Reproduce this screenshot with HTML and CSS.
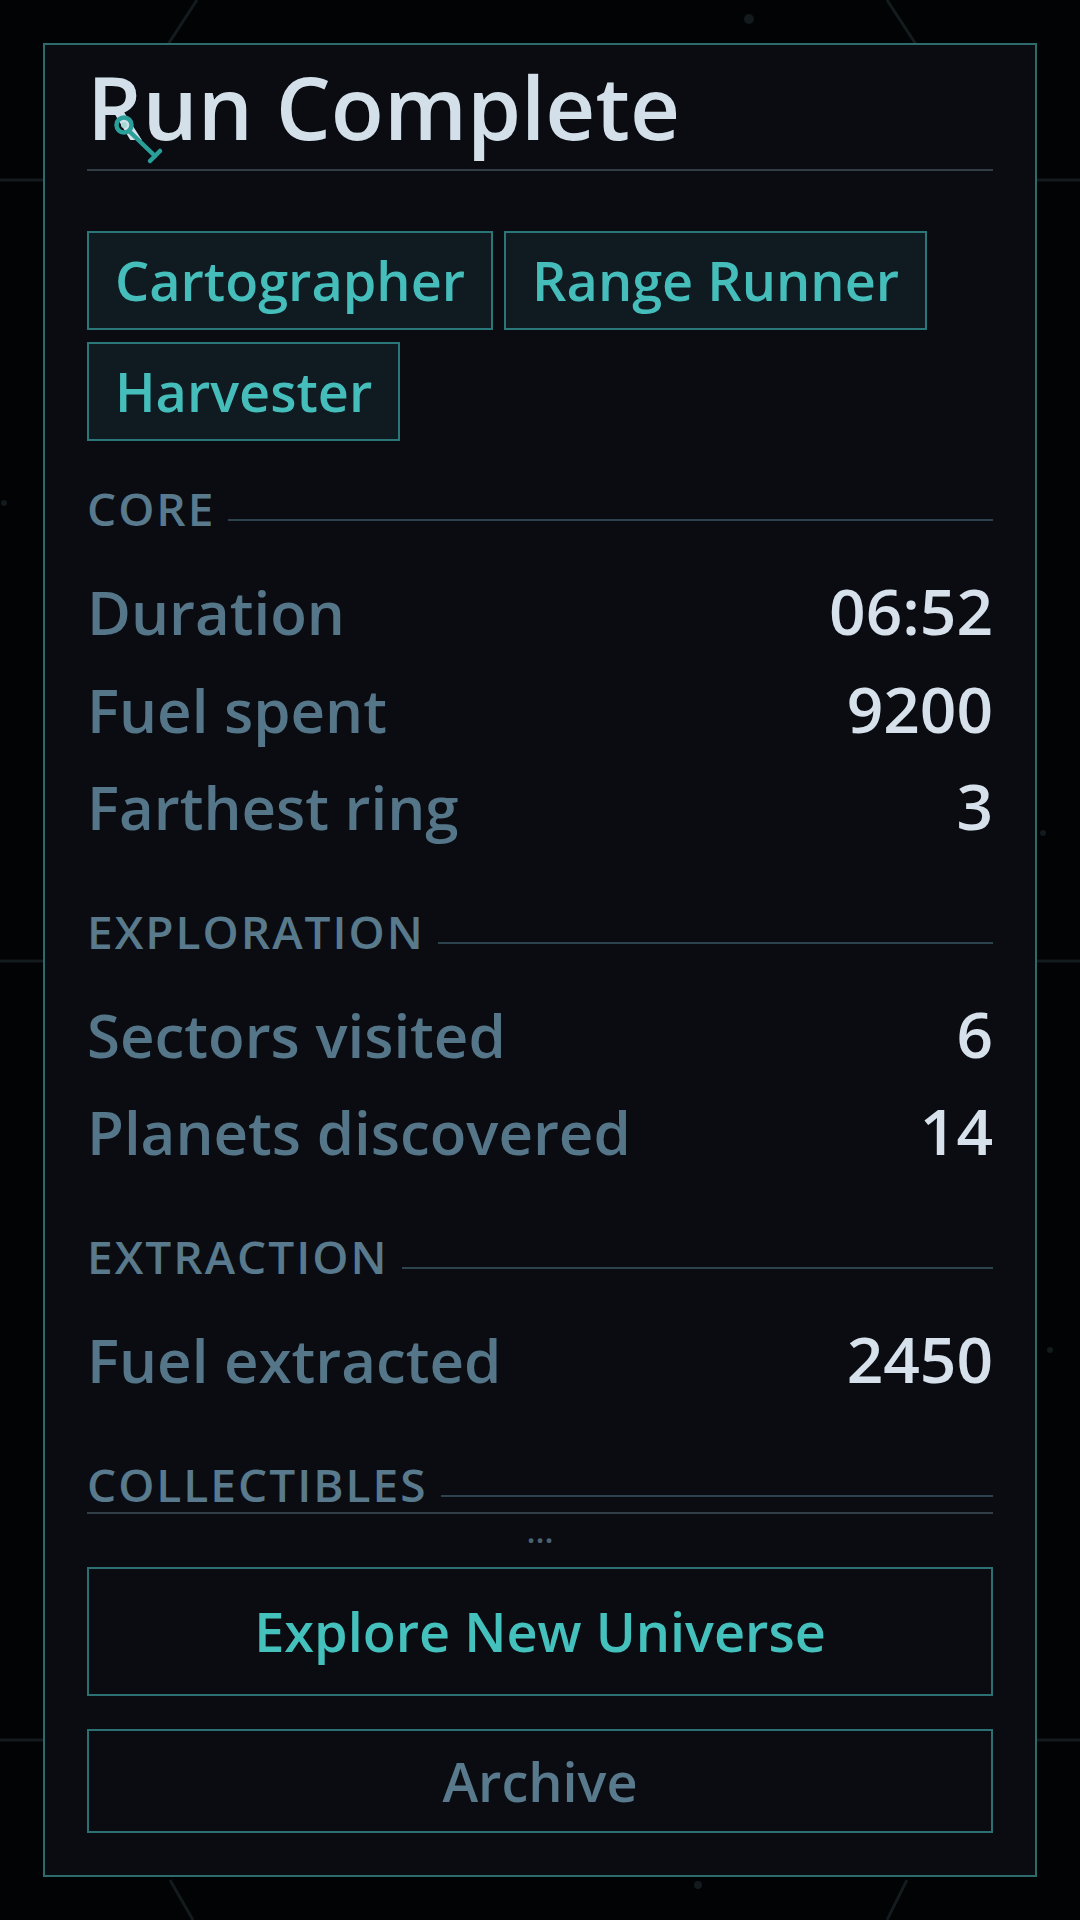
FILE: index.html
```html
<!DOCTYPE html>
<html lang="en">
<head>
<meta charset="utf-8">
<title>Run Complete</title>
<link rel="stylesheet" href="styles.css">
</head>
<body>
<svg class="backdrop" viewBox="0 0 1080 1920" width="1080" height="1920" aria-hidden="true">
  <g stroke="#131b1e" stroke-width="3" fill="none">
    <line x1="197" y1="0" x2="60" y2="210"/>
    <line x1="887" y1="0" x2="1024" y2="210"/>
    <line x1="0" y1="180" x2="1080" y2="180"/>
    <line x1="0" y1="961" x2="1080" y2="961"/>
    <line x1="0" y1="1740" x2="1080" y2="1740"/>
    <line x1="170" y1="1880" x2="193" y2="1920"/>
    <line x1="907" y1="1880" x2="887" y2="1920"/>
  </g>
  <g fill="#121a1d">
    <circle cx="749" cy="19" r="5"/>
    <circle cx="698" cy="1885" r="4"/>
    <circle cx="4" cy="503" r="3"/>
    <circle cx="1043" cy="833" r="3"/>
    <circle cx="1050" cy="1350" r="3"/>
  </g>
</svg>

<main class="panel">
  <header class="panel-head">
    <h1 class="title">Run Complete</h1>
  </header>

  <section class="scroll">
    <div class="tags">
      <span class="tag">Cartographer</span>
      <span class="tag">Range Runner</span>
      <span class="tag">Harvester</span>
    </div>

    <div class="group">
      <div class="group-head"><span class="group-name">CORE</span><span class="group-rule"></span></div>
      <div class="stat"><span class="stat-label">Duration</span><span class="stat-value">06:52</span></div>
      <div class="stat"><span class="stat-label">Fuel spent</span><span class="stat-value">9200</span></div>
      <div class="stat"><span class="stat-label">Farthest ring</span><span class="stat-value">3</span></div>
    </div>

    <div class="group">
      <div class="group-head"><span class="group-name">EXPLORATION</span><span class="group-rule"></span></div>
      <div class="stat"><span class="stat-label">Sectors visited</span><span class="stat-value">6</span></div>
      <div class="stat"><span class="stat-label">Planets discovered</span><span class="stat-value">14</span></div>
    </div>

    <div class="group">
      <div class="group-head"><span class="group-name">EXTRACTION</span><span class="group-rule"></span></div>
      <div class="stat"><span class="stat-label">Fuel extracted</span><span class="stat-value">2450</span></div>
    </div>

    <div class="group">
      <div class="group-head"><span class="group-name">COLLECTIBLES</span><span class="group-rule"></span></div>
    </div>
  </section>

  <div class="more">...</div>

  <div class="actions">
    <button class="btn btn-primary" type="button">Explore New Universe</button>
    <button class="btn btn-secondary" type="button">Archive</button>
  </div>
</main>

<svg class="probe" viewBox="0 0 60 60" width="60" height="60" aria-hidden="true">
  <circle cx="16" cy="17" r="7.5" fill="none" stroke="#2a9f9a" stroke-width="4.5"/>
  <circle cx="16" cy="17" r="3" fill="#a6d8d5"/>
  <line x1="21" y1="23" x2="47" y2="48" stroke="#2a9f9a" stroke-width="4.5" stroke-linecap="round"/>
  <line x1="42" y1="53" x2="52" y2="43" stroke="#2a9f9a" stroke-width="4.5" stroke-linecap="round"/>
</svg>
</body>
</html>
```

FILE: styles.css
```css
* {
  box-sizing: border-box;
}

html,
body {
  margin: 0;
  padding: 0;
  width: 1080px;
  height: 1920px;
  background: #020304;
  overflow: hidden;
}

body {
  position: relative;
  font-family: "Open Sans", "Noto Sans", "DejaVu Sans", sans-serif;
  display: flex;
  justify-content: center;
  align-items: center;
}

.backdrop {
  position: absolute;
  left: 0;
  top: 0;
  z-index: 0;
}

.panel {
  position: relative;
  z-index: 1;
  width: 994px;
  height: 1834px;
  background: #0a0c12;
  border: 2px solid #2c6a6b;
  padding: 0 42px 42px;
  display: flex;
  flex-direction: column;
}

.panel-head {
  padding: 8px 0 10px;
  border-bottom: 2px solid #323e46;
}

.title {
  margin: 0;
  font-size: 87px;
  line-height: 106px;
  font-weight: 600;
  color: #d3dfe9;
}

.scroll {
  flex: 1;
  min-height: 0;
  overflow: hidden;
  padding-top: 60px;
  border-bottom: 2px solid #323e46;
}

.tags {
  display: flex;
  flex-wrap: wrap;
  gap: 12px 11px;
}

.tag {
  display: inline-block;
  font-size: 54px;
  font-weight: 600;
  color: #45bdbb;
  background: #0f1b20;
  border: 2px solid #2a7779;
  padding: 12px 26px;
  line-height: 71px;
}

.group {
  margin-top: 46px;
}

.tags + .group {
  margin-top: 37px;
}

.group-head {
  display: flex;
  align-items: flex-end;
  gap: 13px;
  margin-bottom: 24px;
}

.group-name {
  font-size: 46px;
  font-weight: 600;
  line-height: 60px;
  letter-spacing: 2px;
  color: #587a8c;
}

.group-rule {
  flex: 1;
  height: 2px;
  background: #2d434e;
  margin-bottom: 17px;
}

.stat {
  display: flex;
  justify-content: space-between;
  align-items: baseline;
  padding: 10px 0;
  height: 97.6px;
  font-weight: 600;
  line-height: 77.6px;
}

.stat-label {
  font-size: 60px;
  color: #557689;
}

.stat-value {
  font-size: 64px;
  color: #d6e1eb;
}

.more {
  height: 53px;
  font-size: 33px;
  line-height: 33px;
  text-align: center;
  color: #4b6272;
  font-weight: 600;
}

.actions {
  display: flex;
  flex-direction: column;
  gap: 33px;
}

.btn {
  display: block;
  width: 100%;
  background: transparent;
  border: 2px solid #2b7173;
  font-family: "Open Sans", "Noto Sans", "DejaVu Sans", sans-serif;
  font-size: 54px;
  font-weight: 600;
  line-height: 75px;
  padding: 0;
  cursor: pointer;
}

.btn-primary {
  height: 129px;
  color: #45c1bd;
}

.btn-secondary {
  height: 104px;
  color: #587a8c;
}

.probe {
  position: absolute;
  left: 108px;
  top: 108px;
  z-index: 2;
}
```
